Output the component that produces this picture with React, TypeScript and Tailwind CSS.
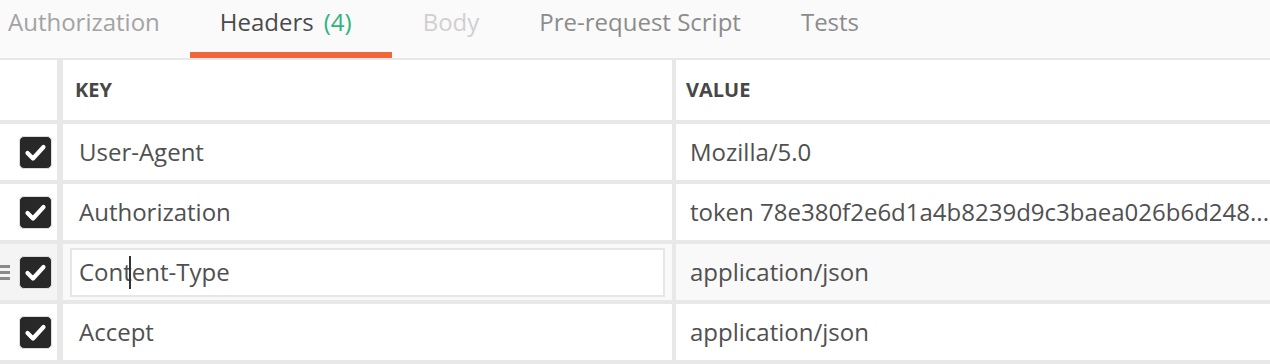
const tabs = [
  { label: "Authorization", cls: "text-[#a3a3a3] pl-[8px] pr-[30px]" },
  { label: "Headers", cls: "text-[#4a4a4a] pl-[30px] pr-[40px]", count: "(4)", active: true },
  { label: "Body", cls: "text-[#d0d0d0] pl-[31px] pr-[30px]" },
  { label: "Pre-request Script", cls: "text-[#8c8c8c] px-[30px]" },
  { label: "Tests", cls: "text-[#8c8c8c] px-[30px]" },
];

const rows = [
  { key: "User-Agent", value: "Mozilla/5.0" },
  { key: "Authorization", value: "token 78e380f2e6d1a4b8239d9c3baea026b6d248..." },
  { key: "Content-Type", value: "application/json", editing: true },
  { key: "Accept", value: "application/json" },
];

const Checkbox = () => (
  <div className="w-[33px] h-[33px] rounded-[5px] bg-[#282828] border border-[#dcdcdc] flex items-center justify-center">
    <svg width="31" height="31" viewBox="0 0 31 31">
      <path d="M7.5 16 L13 21.5 L23.5 10" fill="none" stroke="white" strokeWidth="4.2" strokeLinecap="round" strokeLinejoin="round" />
    </svg>
  </div>
);

const DragHandle = () => (
  <div className="flex flex-col gap-[3px] w-[10px]">
    <div className="h-[3px] bg-[#8a8a8a]" />
    <div className="h-[3px] bg-[#8a8a8a]" />
    <div className="h-[3px] bg-[#8a8a8a]" />
  </div>
);

const App = () => {
  return (
    <div className="w-[1270px] h-[364px] overflow-hidden bg-[#e8e8e8] font-['Open_Sans',sans-serif] text-[24px] text-[#505050]">
      <div className="h-[58px] bg-[#fafafa] flex items-stretch">
        {tabs.map((t) => (
          <div
            key={t.label}
            className={`relative flex items-center pb-[14px] whitespace-nowrap ${t.cls}`}
          >
            {t.label}
            {t.count && <span className="ml-[10px] text-[#2eb47d]">{t.count}</span>}
            {t.active && <div className="absolute left-0 right-0 bottom-0 h-[6px] bg-[#f0683a]" />}
          </div>
        ))}
      </div>
      <div className="h-[2px] bg-[#e8e8e8]" />

      <div className="flex flex-col gap-[4px]">
        <div className="h-[60px] flex bg-white">
          <div className="w-[63px] shrink-0 border-r-[6px] border-[#e8e8e8]" />
          <div className="w-[613px] shrink-0 border-r-4 border-[#e8e8e8] flex items-center pl-[12px] text-[20px] font-bold text-[#474747]">
            KEY
          </div>
          <div className="flex-1 flex items-center pl-[10px] text-[20px] font-bold text-[#474747]">
            VALUE
          </div>
        </div>

        {rows.map((r) => (
          <div key={r.key} className={`h-[56px] flex ${r.editing ? "bg-[#f9f9f9]" : "bg-white"}`}>
            <div
              className={`w-[63px] shrink-0 border-r-[6px] border-[#e8e8e8] flex items-center ${
                r.editing ? "bg-[#f4f4f4]" : ""
              }`}
            >
              <div className="w-[19px] flex items-center">{r.editing && <DragHandle />}</div>
              <Checkbox />
            </div>
            <div className="w-[613px] shrink-0 border-r-4 border-[#e8e8e8] flex items-center">
              {r.editing ? (
                <div className="ml-[7px] w-[595px] h-[49px] bg-white border-2 border-[#e6e6e6] flex items-center pl-[7px]">
                  Cont<span className="inline-block w-[2px] h-[33px] bg-[#333] ml-[-3px] mr-[1px]" />ent-Type
                </div>
              ) : (
                <span className="pl-[16px]">{r.key}</span>
              )}
            </div>
            <div className="flex-1 flex items-center pl-[14px] whitespace-nowrap">{r.value}</div>
          </div>
        ))}
      </div>
    </div>
  );
};

export default App;
